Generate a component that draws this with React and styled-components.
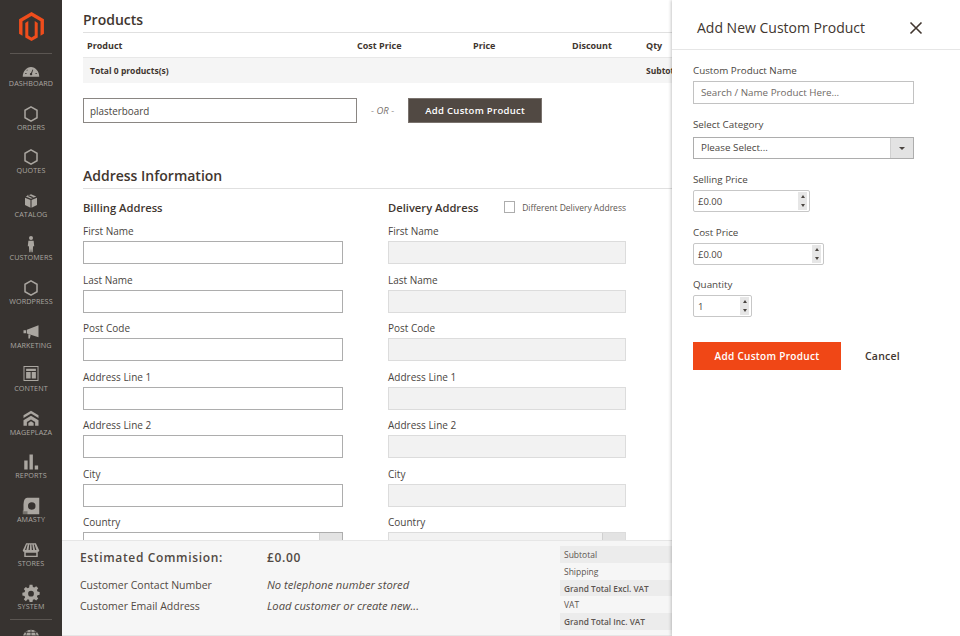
import React from "react";
import styled, { createGlobalStyle } from "styled-components";

const GlobalStyle = createGlobalStyle`
  html, body {
    margin: 0;
    padding: 0;
    background: #fff;
    font-family: "Open Sans", "Liberation Sans", sans-serif;
  }
  * { box-sizing: border-box; }
`;

const hexagon = (
  <path d="M12 2.5 20 7v10l-8 4.5L4 17V7z" fill="none" stroke="currentColor" strokeWidth="2" />
);

const navItems = [
  {
    label: "DASHBOARD",
    icon: (
      <path
        fillRule="evenodd"
        d="M1 21c0-7 5-13 11-13s11 6 11 13zM12 19c.9 0 1.600-.6 1.600-1.500 0-.4-.1-.7-.3-1l1.700-5-.9-.3-2.100 4.800c-.9 0-1.500.7-1.500 1.500s.6 1.500 1.500 1.500zM4 17h2.200v-1H4zm2.600-4 1-.8-.7-.8-.9.8zM17.800 17H20v-1h-2.200z"
      />
    ),
  },
  { label: "ORDERS", icon: hexagon },
  { label: "QUOTES", icon: hexagon },
  {
    label: "CATALOG",
    icon: (
      <path d="M12 3 5 6l7 3 7-3zM4 7.500v9.800L11.300 21V10.800zM20 7.500v9.800L12.700 21V10.800zM8 3.500 15.500 7l-2 1L6.500 4.500z" />
    ),
  },
  {
    label: "CUSTOMERS",
    icon: (
      <>
        <circle cx="12" cy="4" r="2.700" />
        <path d="M8.500 7.500h7l.8 7.500h-1.500l-.6 8h-1.500l-.7-5-.7 5H9.800l-.6-8H7.700z" />
      </>
    ),
  },
  { label: "WORDPRESS", icon: hexagon },
  {
    label: "MARKETING",
    icon: (
      <path d="M2 9.500h3.500v4H2zM6.500 9 22 3v16L6.500 14zM8.500 15l3 1-1 4.500H8.500z" />
    ),
  },
  {
    label: "CONTENT",
    icon: (
      <path
        fillRule="evenodd"
        d="M2 0h20v20H2zm1.300 1.300v17.400h17.400V1.300zM5.500 3.500h13v3h-13zm0 4.500h6v8.500h-6zm7.500 0h5.500v8.500H13z"
      />
    ),
  },
  {
    label: "MAGEPLAZA",
    icon: (
      <path d="M12 1 22 7v3.500L12 4.500l-10 6V7zM12 7.500l10 6V21h-4.500v-5L12 12.500 6.500 16v5H2v-7.500zM12 15l3.500 2.200V21h-7v-3.800z" />
    ),
  },
  {
    label: "REPORTS",
    icon: <path d="M3 10h4.500v12H3zM10 2h4.500v20H10zM17 16.500h4.500V22H17z" />,
  },
  {
    label: "AMASTY",
    icon: (
      <>
        <path
          fillRule="evenodd"
          d="M7 1h16v22H7v-4H2v-6C2 6 3 1 7 1zm6 6a5 5 0 1 0 0 10 5 5 0 0 0 0-10z"
        />
        <rect x="1" y="18" width="6" height="5" opacity=".55" />
      </>
    ),
  },
  {
    label: "STORES",
    icon: (
      <path
        fillRule="evenodd"
        d="M5.500 3h13L23 12.500c0 1-1 1.800-2 1.800v7H3v-7c-1 0-2-.8-2-1.800zM6.500 4.500 4 12h1.800l1.800-7.500zm3.200 0L8.700 12h1.700l.5-7.500zm2.900 0 .5 7.500h1.700l-1-7.500zm3.100 0 1.700 7.500h1.900l-2.500-7.500zM5 15.500v4h14v-4z"
      />
    ),
  },
  {
    label: "SYSTEM",
    icon: (
      <path
        fillRule="evenodd"
        d="M10 1h4l.6 3 2 .8L19.200 3 22 5.800l-1.800 2.600.8 2 3 .6v4l-3 .6-.8 2 1.800 2.600-2.800 2.800-2.600-1.800-2 .8-.6 3h-4l-.6-3-2-.8L4.800 24 2 21.200l1.800-2.600-.8-2-3-.6v-4l3-.6.8-2L2 6.800 4.800 4l2.600 1.800 2-.8zM12 9.500a4 4 0 1 0 0 8 4 4 0 0 0 0-8z"
        transform="translate(.5 0) scale(.96)"
      />
    ),
  },
];

const billingFields = [
  "First Name",
  "Last Name",
  "Post Code",
  "Address Line 1",
  "Address Line 2",
  "City",
];

const summaryRows = [
  { label: "Subtotal", shaded: true },
  { label: "Shipping" },
  { label: "Grand Total Excl. VAT", shaded: true, strong: true },
  { label: "VAT" },
  { label: "Grand Total Inc. VAT", shaded: true, strong: true },
];

const Page = styled.div`
  position: relative;
  display: flex;
  width: 960px;
  height: 636px;
  overflow: hidden;
  background: #fff;
`;

const Sidebar = styled.nav`
  flex: 0 0 62px;
  height: 636px;
  overflow: hidden;
  background: #373330;
  color: #aaa6a0;
`;

const LogoWrap = styled.div`
  display: flex;
  justify-content: center;
  height: 54px;
  margin: 0 10px;
  padding-top: 12px;
  border-bottom: 1px solid #5b5652;
  color: #ee4d1c;
`;

const NavList = styled.div`
  display: flex;
  flex-direction: column;
  gap: 16.6px;
  padding-top: 7px;
`;

const NavItem = styled.div`
  display: flex;
  flex-direction: column;
  align-items: center;
  height: 27px;
  flex: none;
`;

const NavIcon = styled.svg`
  flex: none;
  width: 18px;
  height: 18px;
  fill: currentColor;
`;

const NavLabel = styled.span`
  font-size: 7.200px;
  line-height: 9px;
  letter-spacing: 0.1px;
  white-space: nowrap;
`;

const SideDivider = styled.div`
  height: 1px;
  margin: -8.600px 10px 0;
  background: #5b5652;
`;

const WebIcon = styled(NavIcon)`
  align-self: center;
  margin-top: -8px;
`;

const Main = styled.main`
  flex: 1;
  min-width: 0;
  height: 636px;
  padding: 11px 0 0 21px;
  overflow: hidden;
  color: #41362f;
`;

const SectionTitle = styled.h2`
  margin: 0;
  height: 22px;
  font-size: 14px;
  line-height: 18px;
  font-weight: 600;
  color: #41362f;
  border-bottom: 1px solid #e0e0e0;
`;

const TableRow = styled.div`
  display: grid;
  grid-template-columns: 270px 116px 99px 74px 100px;
  width: 700px;
  align-items: center;
  font-size: 9px;
  font-weight: 700;
  white-space: nowrap;
`;

const TableHead = styled(TableRow)`
  height: 25px;
  padding: 0 0 0 4px;
  border-bottom: 1px solid #e8e8e8;
`;

const TableTotal = styled(TableRow)`
  height: 25px;
  padding-left: 7px;
  grid-template-columns: 556px 100px;
  background: #f5f5f5;
  font-size: 8.500px;
`;

const SearchRow = styled.div`
  display: flex;
  align-items: center;
  margin-top: 15px;
`;

const SearchInput = styled.input`
  width: 274px;
  height: 25px;
  padding: 0 6px;
  border: 1px solid #8a8683;
  border-radius: 0;
  font: 9.900px "Open Sans", sans-serif;
  color: #4a4541;
  outline: none;
`;

const OrText = styled.span`
  margin: 0 14px 0 14px;
  font-size: 9.500px;
  font-style: italic;
  color: #77716c;
`;

const DarkButton = styled.button`
  width: 134px;
  height: 25px;
  padding: 0;
  border: 1px solid #7a736e;
  background: #514943;
  color: #fff;
  font: 600 9.500px "Open Sans", sans-serif;
  letter-spacing: 0.3px;
`;

const AddressTitle = styled(SectionTitle)`
  margin-top: 44px;
`;

const AddressGrid = styled.div`
  display: grid;
  grid-template-columns: 260px 238px;
  column-gap: 45px;
  margin-top: 10px;
`;

const AddressHead = styled.div`
  display: flex;
  align-items: center;
  height: 16px;
  margin-bottom: 8px;
  font-size: 11.200px;
  font-weight: 600;
  white-space: nowrap;
`;

const CheckBox = styled.span`
  width: 12px;
  height: 12px;
  margin: 0 7px 0 25px;
  border: 1px solid #adadad;
  background: #fff;
`;

const CheckLabel = styled.span`
  font-size: 8.500px;
  font-weight: 400;
  color: #5c5551;
`;

const Field = styled.div`
  height: 48.500px;
`;

const FieldLabel = styled.label`
  display: block;
  height: 18px;
  font-size: 10px;
  line-height: 16px;
  color: #4a4541;
`;

const TextInput = styled.input`
  display: block;
  width: 100%;
  height: 23px;
  padding: 0 7px;
  border: 1px solid ${(p) => (p.disabled ? "#dcdcdc" : "#adadad")};
  border-radius: 0;
  background: ${(p) => (p.disabled ? "#f2f2f2" : "#fff")};
  font: 9.500px "Open Sans", sans-serif;
  outline: none;
`;

const CountrySelect = styled.div`
  display: flex;
  justify-content: flex-end;
  height: 23px;
  border: 1px solid ${(p) => (p.$disabled ? "#dcdcdc" : "#adadad")};
  background: ${(p) => (p.$disabled ? "#f2f2f2" : "#fff")};
`;

const SelectCap = styled.span`
  display: flex;
  align-items: center;
  justify-content: center;
  width: 23px;
  background: #e3e3e3;
  border-left: 1px solid #d0d0d0;
`;

const Footer = styled.footer`
  position: absolute;
  left: 62px;
  top: 540px;
  width: 610px;
  height: 96px;
  display: flex;
  justify-content: space-between;
  background: #f6f6f6;
  border-top: 1px solid #e6e6e6;
  border-bottom: 1px solid #e6e6e6;
`;

const FooterInfo = styled.div`
  padding: 5px 0 0 18px;
  color: #514943;
`;

const CommissionRow = styled.div`
  display: grid;
  grid-template-columns: 187px auto;
  height: 22px;
  margin-bottom: 6px;
  align-items: center;
  font-size: 12px;
  font-weight: 600;
  letter-spacing: 0.65px;
`;

const InfoRow = styled.div`
  display: grid;
  grid-template-columns: 187px auto;
  height: 21px;
  align-items: center;
  font-size: 10.500px;
  white-space: nowrap;
`;

const InfoValue = styled.span`
  font-size: 11.200px;
  font-style: italic;
`;

const Summary = styled.div`
  width: 112px;
  padding-top: 5px;
`;

const SummaryRow = styled.div`
  height: 16.750px;
  padding-left: 4px;
  background: ${(p) => (p.$shaded ? "#ececec" : "transparent")};
  font-size: ${(p) => (p.$strong ? 8.3 : 8.5)}px;
  line-height: 17px;
  font-weight: ${(p) => (p.$strong ? 600 : 400)};
  color: #5c5551;
  white-space: nowrap;
`;

const Panel = styled.aside`
  position: absolute;
  top: 0;
  right: 0;
  width: 288px;
  height: 636px;
  background: #fff;
  box-shadow: -1px 0 3px rgba(0, 0, 0, 0.22);
  color: #4a4541;
`;

const PanelHeader = styled.header`
  display: flex;
  align-items: center;
  justify-content: space-between;
  height: 50px;
  padding: 6px 37px 0 25px;
  border-bottom: 1px solid #e6e6e6;
`;

const PanelTitle = styled.h3`
  margin: 0;
  font-size: 14px;
  font-weight: 400;
  color: #41362f;
`;

const CloseIcon = styled.svg`
  width: 14px;
  height: 14px;
  stroke: #41362f;
  stroke-width: 1.600;
`;

const PanelBody = styled.form`
  padding: 12px 0 0 21px;
`;

const PanelLabel = styled.label`
  display: block;
  height: 19px;
  font-size: 9.800px;
  line-height: 18px;
`;

const PanelField = styled.div`
  height: ${(p) => p.$height}px;
`;

const NameInput = styled.input`
  display: block;
  width: 221px;
  height: 23px;
  padding: 0 7px;
  border: 1px solid #c2c2c2;
  border-radius: 0;
  font: 9.800px "Open Sans", sans-serif;
  outline: none;

  &::placeholder {
    color: #6f6a66;
    opacity: 1;
  }
`;

const CategorySelect = styled.div`
  display: flex;
  align-items: stretch;
  justify-content: space-between;
  width: 221px;
  height: 22px;
  margin-top: 2px;
  padding-left: 7px;
  border: 1px solid #adadad;
  font-size: 9.800px;
  line-height: 20px;
`;

const Spinner = styled.div`
  display: flex;
  align-items: center;
  justify-content: space-between;
  width: ${(p) => p.$width}px;
  height: 22px;
  padding: 0 1px 0 4px;
  border: 1px solid #c7c7c7;
  border-radius: 2px;
  font-size: 9.500px;
`;

const SpinButtons = styled.span`
  display: flex;
  flex-direction: column;
  align-items: center;
  justify-content: space-around;
  width: 9px;
  height: 18px;
  margin-right: 1px;
  background: #e6e6e6;
`;

const ArrowUp = styled.i`
  border: 2.500px solid transparent;
  border-top: 0;
  border-bottom: 3px solid #4a4541;
`;

const ArrowDown = styled.i`
  border: 2.500px solid transparent;
  border-bottom: 0;
  border-top: 3px solid #4a4541;
`;

const SelectArrow = styled(ArrowDown)`
  border-width: 3px 3px 0;
`;

const PanelActions = styled.div`
  display: flex;
  align-items: center;
  margin-top: 14px;
`;

const OrangeButton = styled.button`
  width: 148px;
  height: 28px;
  padding: 0;
  border: 0;
  background: #f04716;
  color: #fff;
  font: 600 10px "Open Sans", sans-serif;
  letter-spacing: 0.3px;
`;

const CancelLink = styled.span`
  margin-left: 24px;
  font-size: 10.500px;
  font-weight: 600;
  letter-spacing: 0.2px;
  color: #41362f;
`;

const Spin = ({ value, width }) => (
  <Spinner $width={width}>
    {value}
    <SpinButtons>
      <ArrowUp />
      <ArrowDown />
    </SpinButtons>
  </Spinner>
);

const App = () => {
  return (
    <Page>
      <GlobalStyle />
      <Sidebar>
        <LogoWrap>
          <svg width="25" height="29" viewBox="0 0 24 28" fill="currentColor">
            <path d="M12 0 24 7v14l-3.300 1.900V8.900L12 3.900 3.300 8.900v14L0 21V7z" />
            <path d="M12 28l-6-3.500v-14l2.900-1.700v14l3.100 1.800 3.100-1.800v-14l2.900 1.700v14z" />
          </svg>
        </LogoWrap>
        <NavList>
          {navItems.map((item) => (
            <NavItem key={item.label}>
              <NavIcon viewBox="0 0 24 24">{item.icon}</NavIcon>
              <NavLabel>{item.label}</NavLabel>
            </NavItem>
          ))}
          <SideDivider />
          <WebIcon viewBox="0 0 24 24">
            <circle cx="12" cy="12" r="11" />
            <path
              d="M1 9h22M4 4.500h16M12 1v10M7 2 5 9M17 2l2 7"
              fill="none"
              stroke="#373330"
              strokeWidth="1"
            />
          </WebIcon>
        </NavList>
      </Sidebar>

      <Main>
        <SectionTitle>Products</SectionTitle>
        <TableHead>
          <span>Product</span>
          <span>Cost Price</span>
          <span>Price</span>
          <span>Discount</span>
          <span>Qty</span>
        </TableHead>
        <TableTotal>
          <span>Total 0 products(s)</span>
          <span>Subtotal</span>
        </TableTotal>
        <SearchRow>
          <SearchInput defaultValue="plasterboard" />
          <OrText>- OR -</OrText>
          <DarkButton type="button">Add Custom Product</DarkButton>
        </SearchRow>

        <AddressTitle>Address Information</AddressTitle>
        <AddressGrid>
          <div>
            <AddressHead>Billing Address</AddressHead>
            {billingFields.map((name) => (
              <Field key={name}>
                <FieldLabel>{name}</FieldLabel>
                <TextInput />
              </Field>
            ))}
            <Field>
              <FieldLabel>Country</FieldLabel>
              <CountrySelect>
                <SelectCap />
              </CountrySelect>
            </Field>
          </div>
          <div>
            <AddressHead>
              Delivery Address
              <CheckBox />
              <CheckLabel>Different Delivery Address</CheckLabel>
            </AddressHead>
            {billingFields.map((name) => (
              <Field key={name}>
                <FieldLabel>{name}</FieldLabel>
                <TextInput disabled />
              </Field>
            ))}
            <Field>
              <FieldLabel>Country</FieldLabel>
              <CountrySelect $disabled>
                <SelectCap />
              </CountrySelect>
            </Field>
          </div>
        </AddressGrid>
      </Main>

      <Footer>
        <FooterInfo>
          <CommissionRow>
            <span>Estimated Commision:</span>
            <span>£0.00</span>
          </CommissionRow>
          <InfoRow>
            <span>Customer Contact Number</span>
            <InfoValue>No telephone number stored</InfoValue>
          </InfoRow>
          <InfoRow>
            <span>Customer Email Address</span>
            <InfoValue>Load customer or create new...</InfoValue>
          </InfoRow>
        </FooterInfo>
        <Summary>
          {summaryRows.map((row) => (
            <SummaryRow key={row.label} $shaded={row.shaded} $strong={row.strong}>
              {row.label}
            </SummaryRow>
          ))}
        </Summary>
      </Footer>

      <Panel>
        <PanelHeader>
          <PanelTitle>Add New Custom Product</PanelTitle>
          <CloseIcon viewBox="0 0 14 14">
            <path d="M1.500 1.500l11 11M12.500 1.500l-11 11" />
          </CloseIcon>
        </PanelHeader>
        <PanelBody>
          <PanelField $height={54}>
            <PanelLabel>Custom Product Name</PanelLabel>
            <NameInput placeholder="Search / Name Product Here..." />
          </PanelField>
          <PanelField $height={55}>
            <PanelLabel>Select Category</PanelLabel>
            <CategorySelect>
              Please Select...
              <SelectCap>
                <SelectArrow />
              </SelectCap>
            </CategorySelect>
          </PanelField>
          <PanelField $height={53}>
            <PanelLabel>Selling Price</PanelLabel>
            <Spin value="£0.00" width={117} />
          </PanelField>
          <PanelField $height={52}>
            <PanelLabel>Cost Price</PanelLabel>
            <Spin value="£0.00" width={131} />
          </PanelField>
          <PanelField $height={52}>
            <PanelLabel>Quantity</PanelLabel>
            <Spin value="1" width={59} />
          </PanelField>
          <PanelActions>
            <OrangeButton type="button">Add Custom Product</OrangeButton>
            <CancelLink>Cancel</CancelLink>
          </PanelActions>
        </PanelBody>
      </Panel>
    </Page>
  );
};

export default App;
